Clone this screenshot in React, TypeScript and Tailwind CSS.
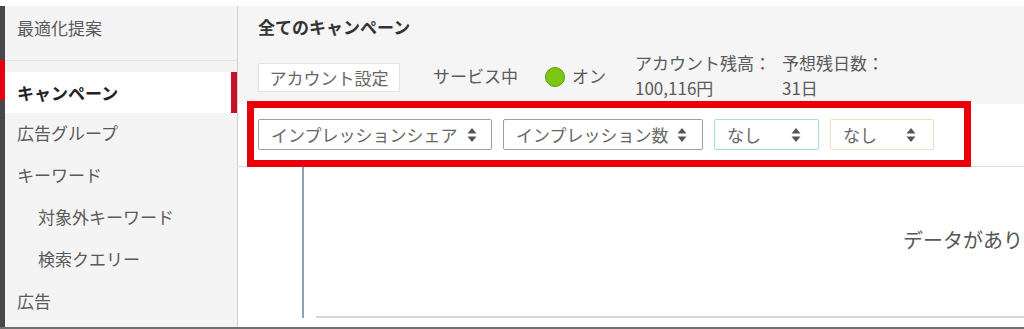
import React from 'react';

const SortIcon = () => (
  <svg width="10" height="16" viewBox="0 0 10 16" className="shrink-0">
    <path d="M5 1 L9.5 6.5 H0.5 Z" fill="#555" />
    <path d="M5 15 L9.5 9.5 H0.5 Z" fill="#555" />
  </svg>
);

const SELECTS = [
  { label: 'インプレッションシェア', width: 'w-[234px]', border: 'border-[#8fa3aa]', pr: 'pr-[14px]' },
  { label: 'インプレッション数', width: 'w-[200px]', border: 'border-[#ab96a3]', pr: 'pr-[15px]' },
  { label: 'なし', width: 'w-[105px]', border: 'border-[#a9dbe0]', pr: 'pr-[17px]' },
  { label: 'なし', width: 'w-[104px]', border: 'border-[#e9e1c0]', pr: 'pr-[17px]' },
];

const NAV = [
  { label: '広告グループ', sub: false },
  { label: 'キーワード', sub: false },
  { label: '対象外キーワード', sub: true },
  { label: '検索クエリー', sub: true },
  { label: '広告', sub: false },
];

export default function App() {
  return (
    <div className="relative w-[1024px] h-[329px] overflow-hidden bg-white font-['Noto_Sans_CJK_JP','Liberation_Sans',sans-serif] text-[17px]">
      <div className="flex h-[327px] mt-[6px] -mb-[6px]">
        {/* left accent bar */}
        <div className="flex w-[5px] flex-col bg-[#474747]">
          <div className="h-[54px]" />
          <div className="h-[40px] bg-[#e60012]" />
        </div>

        {/* sidebar */}
        <aside className="w-[233px] shrink-0 border-r border-[#cfcfcf] bg-[#f4f4f4] text-[#5a5a5a]">
          <div className="h-[55px] border-b border-[#e2e2e2] pl-[12px] pt-[12px] leading-[20px]">最適化提案</div>
          <div className="mt-[11px] flex h-[41px] items-center justify-between bg-white pl-[12px]">
            <span className="font-bold text-[#222]">キャンペーン</span>
            <span className="h-[41px] w-[6px] bg-[#c8102e]" />
          </div>
          {NAV.map((item, i) => (
            <div
              key={i}
              className={`flex h-[42px] items-center pb-[3px] ${item.sub ? 'pl-[33px]' : 'pl-[12px]'}`}
            >
              {item.label}
            </div>
          ))}
        </aside>

        {/* main */}
        <main className="flex-1 overflow-hidden">
          <div className="h-[98px] bg-[#f5f5f5] pl-[20px] pt-[11px]">
            <h1 className="font-bold leading-[20px] text-[#333]">全てのキャンペーン</h1>
            <div className="mt-[13px] flex items-start text-[#5a5a5a]">
              <button className="mt-[13px] h-[29px] w-[142px] border border-[#e3e3e3] bg-white leading-[27px] text-[#666]">
                アカウント設定
              </button>
              <span className="ml-[33px] mt-[16px] leading-[20px]">サービス中</span>
              <span className="ml-[27px] mt-[17px] h-[20px] w-[20px] rounded-full border border-[#5e9c0a] bg-[#7cc614]" />
              <span className="ml-[7px] mt-[16px] leading-[20px]">オン</span>
              <div className="ml-[29px] leading-[25px]">
                <div>アカウント残高：</div>
                <div>100,116円</div>
              </div>
              <div className="ml-[11px] leading-[25px]">
                <div>予想残日数：</div>
                <div>31日</div>
              </div>
            </div>
          </div>

          {/* filter row */}
          <div className="flex h-[63px] gap-[11px] border-b border-[#dddddd] bg-white pl-[20px] pt-[15px]">
            {SELECTS.map((s, i) => (
              <div
                key={i}
                className={`flex h-[31px] items-center justify-between rounded-[2px] border bg-white pl-[12px] text-[#666] ${s.width} ${s.border} ${s.pr}`}
              >
                <span className="whitespace-nowrap leading-[20px]">{s.label}</span>
                <SortIcon />
              </div>
            ))}
          </div>

          {/* chart */}
          <div className="flex h-[160px] bg-white">
            <div className="ml-[64px] h-[151px] w-[2px] bg-[#8fa1b5]" />
            <div className="ml-[12px] h-[151px] flex-1 overflow-hidden whitespace-nowrap border-b-2 border-[#d6d6d6] pl-[587px] pt-[60px] text-[20px] leading-[26px] text-[#555]">
              データがありません
            </div>
          </div>
        </main>
      </div>

      {/* bottom edge */}
      <div className="absolute bottom-0 left-0 h-[2px] w-full bg-[#707070]" />

      {/* annotation box */}
      <div className="pointer-events-none absolute left-[247px] top-[101px] h-[66px] w-[724px] border-[7px] border-[#e8000b]" />
    </div>
  );
}
